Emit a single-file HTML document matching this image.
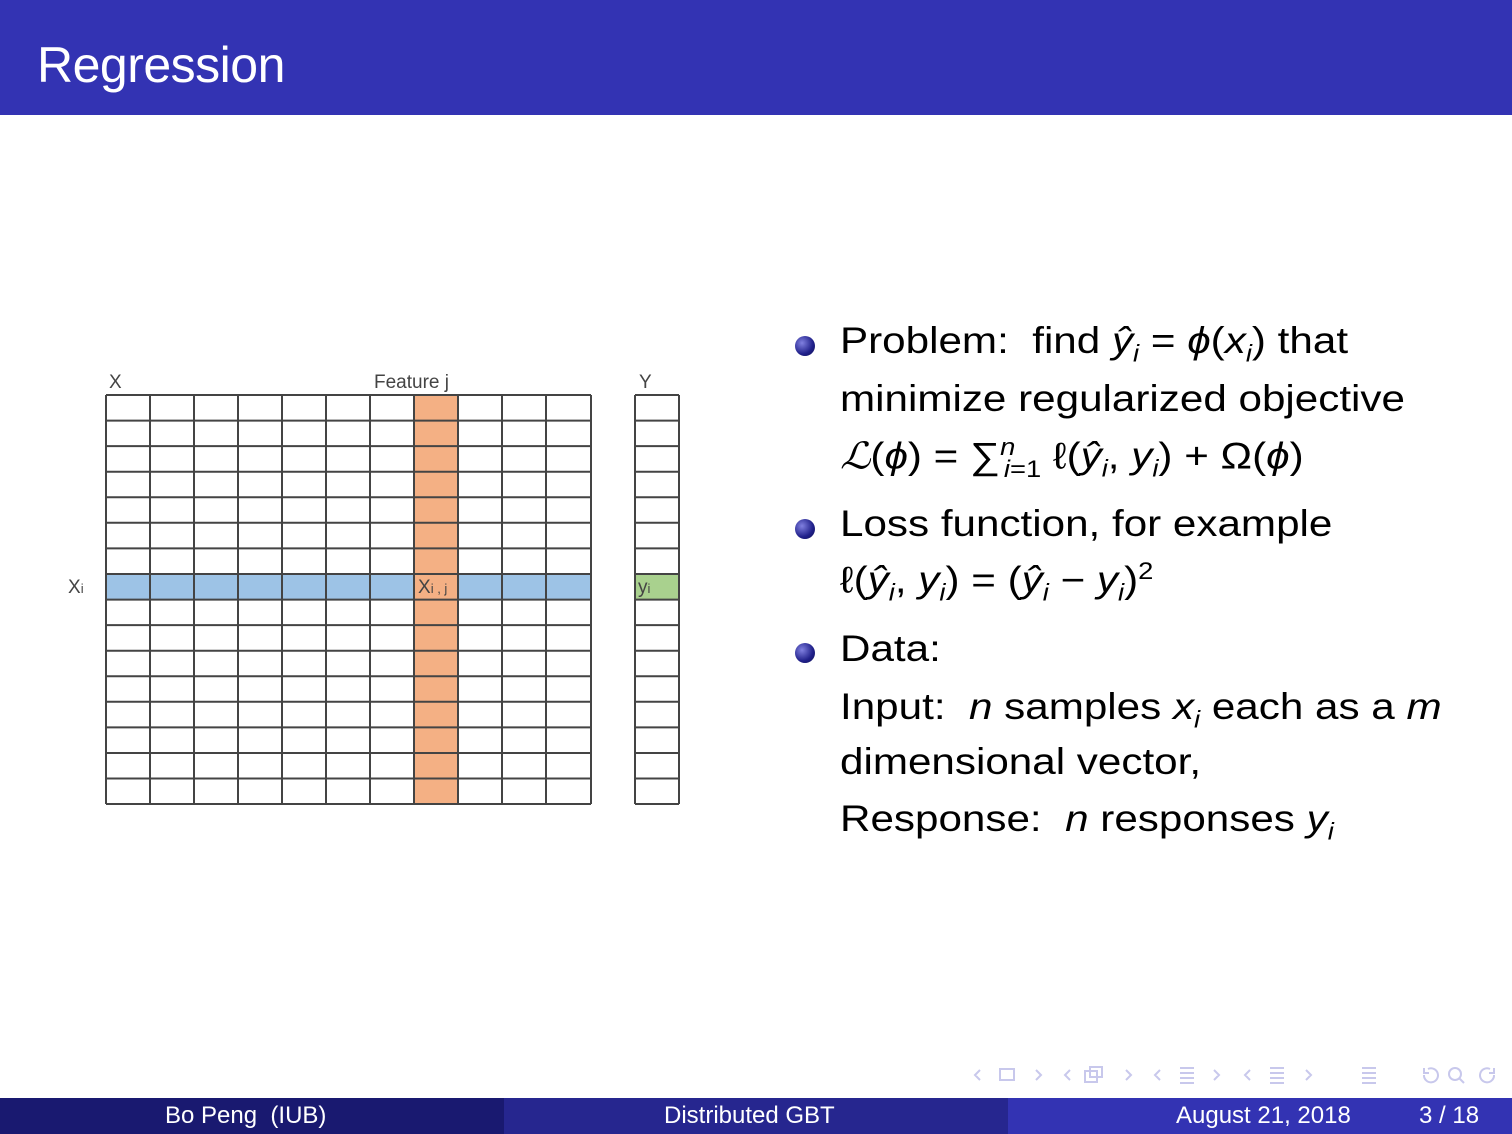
<!DOCTYPE html>
<html><head><meta charset="utf-8"><style>
body{margin:0;width:1512px;height:1134px;position:relative;background:#fff;font-family:"Liberation Sans",sans-serif;overflow:hidden}
.hdr{position:absolute;left:0;top:0;width:1512px;height:115px;background:#3333b3}
.hdr span{position:absolute;left:37px;top:36px;color:#fff;font-size:50px;letter-spacing:-0.5px}
.t{position:absolute;font-size:37px;color:#000;white-space:nowrap;transform:scaleX(1.14);transform-origin:0 0}
.b{position:absolute;width:20px;height:20px;border-radius:50%;background:radial-gradient(circle at 35% 35%,#8080e0,#20208a 60%,#101050)}
i{font-style:italic}
.ft{position:absolute;top:1098px;height:36px;color:#fff;font-size:24px;line-height:36px}
.lbl{position:absolute;font-size:19px;color:#444}
</style></head><body>
<div class="hdr"><span>Regression</span></div>

<svg style="position:absolute;left:0;top:0" width="1512" height="1134">
<rect x="414" y="395" width="44" height="409" fill="#f4b084"/>
<rect x="106" y="574" width="485" height="25.6" fill="#9dc3e6"/>
<rect x="414" y="574" width="44" height="25.6" fill="#f4b084"/>
<rect x="635" y="574" width="44" height="25.6" fill="#a9d18e"/>
<g stroke="#444" stroke-width="2" fill="none">
<path d="M106 395V804M150 395V804M194 395V804M238 395V804M282 395V804M326 395V804M370 395V804M414 395V804M458 395V804M502 395V804M546 395V804M591 395V804M635 395V804M679 395V804"/>
<path d="M106 395.0H591M106 420.6H591M106 446.1H591M106 471.7H591M106 497.3H591M106 522.8H591M106 548.4H591M106 574.0H591M106 599.6H591M106 625.1H591M106 650.7H591M106 676.3H591M106 701.8H591M106 727.4H591M106 753.0H591M106 778.5H591M106 804H591"/>
<path d="M635 395.0H679M635 420.6H679M635 446.1H679M635 471.7H679M635 497.3H679M635 522.8H679M635 548.4H679M635 574.0H679M635 599.6H679M635 625.1H679M635 650.7H679M635 676.3H679M635 701.8H679M635 727.4H679M635 753.0H679M635 778.5H679M635 804H679"/>
</g>
<g fill="none" stroke="#c8c8ec" stroke-width="2">
<path d="M980 1070l-5 5 5 5M1036 1070l5 5-5 5M1070 1070l-5 5 5 5M1126 1070l5 5-5 5M1160 1070l-5 5 5 5M1214 1070l5 5-5 5M1250 1070l-5 5 5 5M1306 1070l5 5-5 5"/>
<rect x="1000" y="1069" width="14" height="11"/>
<rect x="1085" y="1071" width="12" height="11"/><rect x="1090" y="1067" width="12" height="10"/>
<path d="M1180 1068h14M1180 1073h14M1180 1078h14M1180 1083h14M1270 1068h14M1270 1073h14M1270 1078h14M1270 1083h14M1362 1068h14M1362 1073h14M1362 1078h14M1362 1083h14"/>
<path d="M1424 1075a7 7 0 1 0 4-6M1424 1068v5h5"/>
<circle cx="1455" cy="1074" r="6"/><path d="M1459 1078l5 5"/>
<path d="M1494 1075a7 7 0 1 1-4-6M1494 1068v5h-5"/>
</g>
</svg>
<div class="lbl" style="left:109px;top:372px">X</div>
<div class="lbl" style="left:374px;top:372px">Feature j</div>
<div class="lbl" style="left:639px;top:372px">Y</div>
<div class="lbl" style="left:68px;top:577px">X<span style="font-size:13px">i</span></div>
<div class="lbl" style="left:418px;top:577px">X<span style="font-size:13px">i , j</span></div>
<div class="lbl" style="left:638px;top:577px">y<span style="font-size:13px">i</span></div>

<div class="b" style="left:795px;top:336px"></div>
<div class="t" style="left:840px;top:320px">Problem: &nbsp;find <i>ŷ<sub style="font-size:24px">i</sub></i> = <i>ϕ</i>(<i>x<sub style="font-size:24px">i</sub></i>) that</div>
<div class="t" style="left:840px;top:378px">minimize regularized objective</div>
<div class="t" style="left:840px;top:434px"><i>ℒ</i>(<i>ϕ</i>) = ∑<sup style="font-size:24px"><i>n</i></sup><sub style="font-size:24px;margin-left:-10px"><i>i</i>=1</sub> ℓ(<i>ŷ<sub style="font-size:24px">i</sub></i>, <i>y<sub style="font-size:24px">i</sub></i>) + Ω(<i>ϕ</i>)</div>
<div class="b" style="left:795px;top:519px"></div>
<div class="t" style="left:840px;top:503px">Loss function, for example</div>
<div class="t" style="left:840px;top:558px">ℓ(<i>ŷ<sub style="font-size:24px">i</sub></i>, <i>y<sub style="font-size:24px">i</sub></i>) = (<i>ŷ<sub style="font-size:24px">i</sub></i> − <i>y<sub style="font-size:24px">i</sub></i>)<sup style="font-size:24px">2</sup></div>
<div class="b" style="left:795px;top:643px"></div>
<div class="t" style="left:840px;top:628px">Data:</div>
<div class="t" style="left:840px;top:686px">Input: &nbsp;<i>n</i> samples <i>x<sub style="font-size:24px">i</sub></i> each as a <i>m</i></div>
<div class="t" style="left:840px;top:741px">dimensional vector,</div>
<div class="t" style="left:840px;top:798px">Response: &nbsp;<i>n</i> responses <i>y<sub style="font-size:24px">i</sub></i></div>

<div class="ft" style="left:0;width:504px;background:#191970"><span style="position:absolute;left:165px">Bo Peng &nbsp;(IUB)</span></div>
<div class="ft" style="left:504px;width:504px;background:#26268f"><span style="position:absolute;left:160px">Distributed GBT</span></div>
<div class="ft" style="left:1008px;width:504px;background:#3333b3"><span style="position:absolute;left:168px">August 21, 2018</span><span style="position:absolute;left:411px">3 / 18</span></div>
</body></html>
